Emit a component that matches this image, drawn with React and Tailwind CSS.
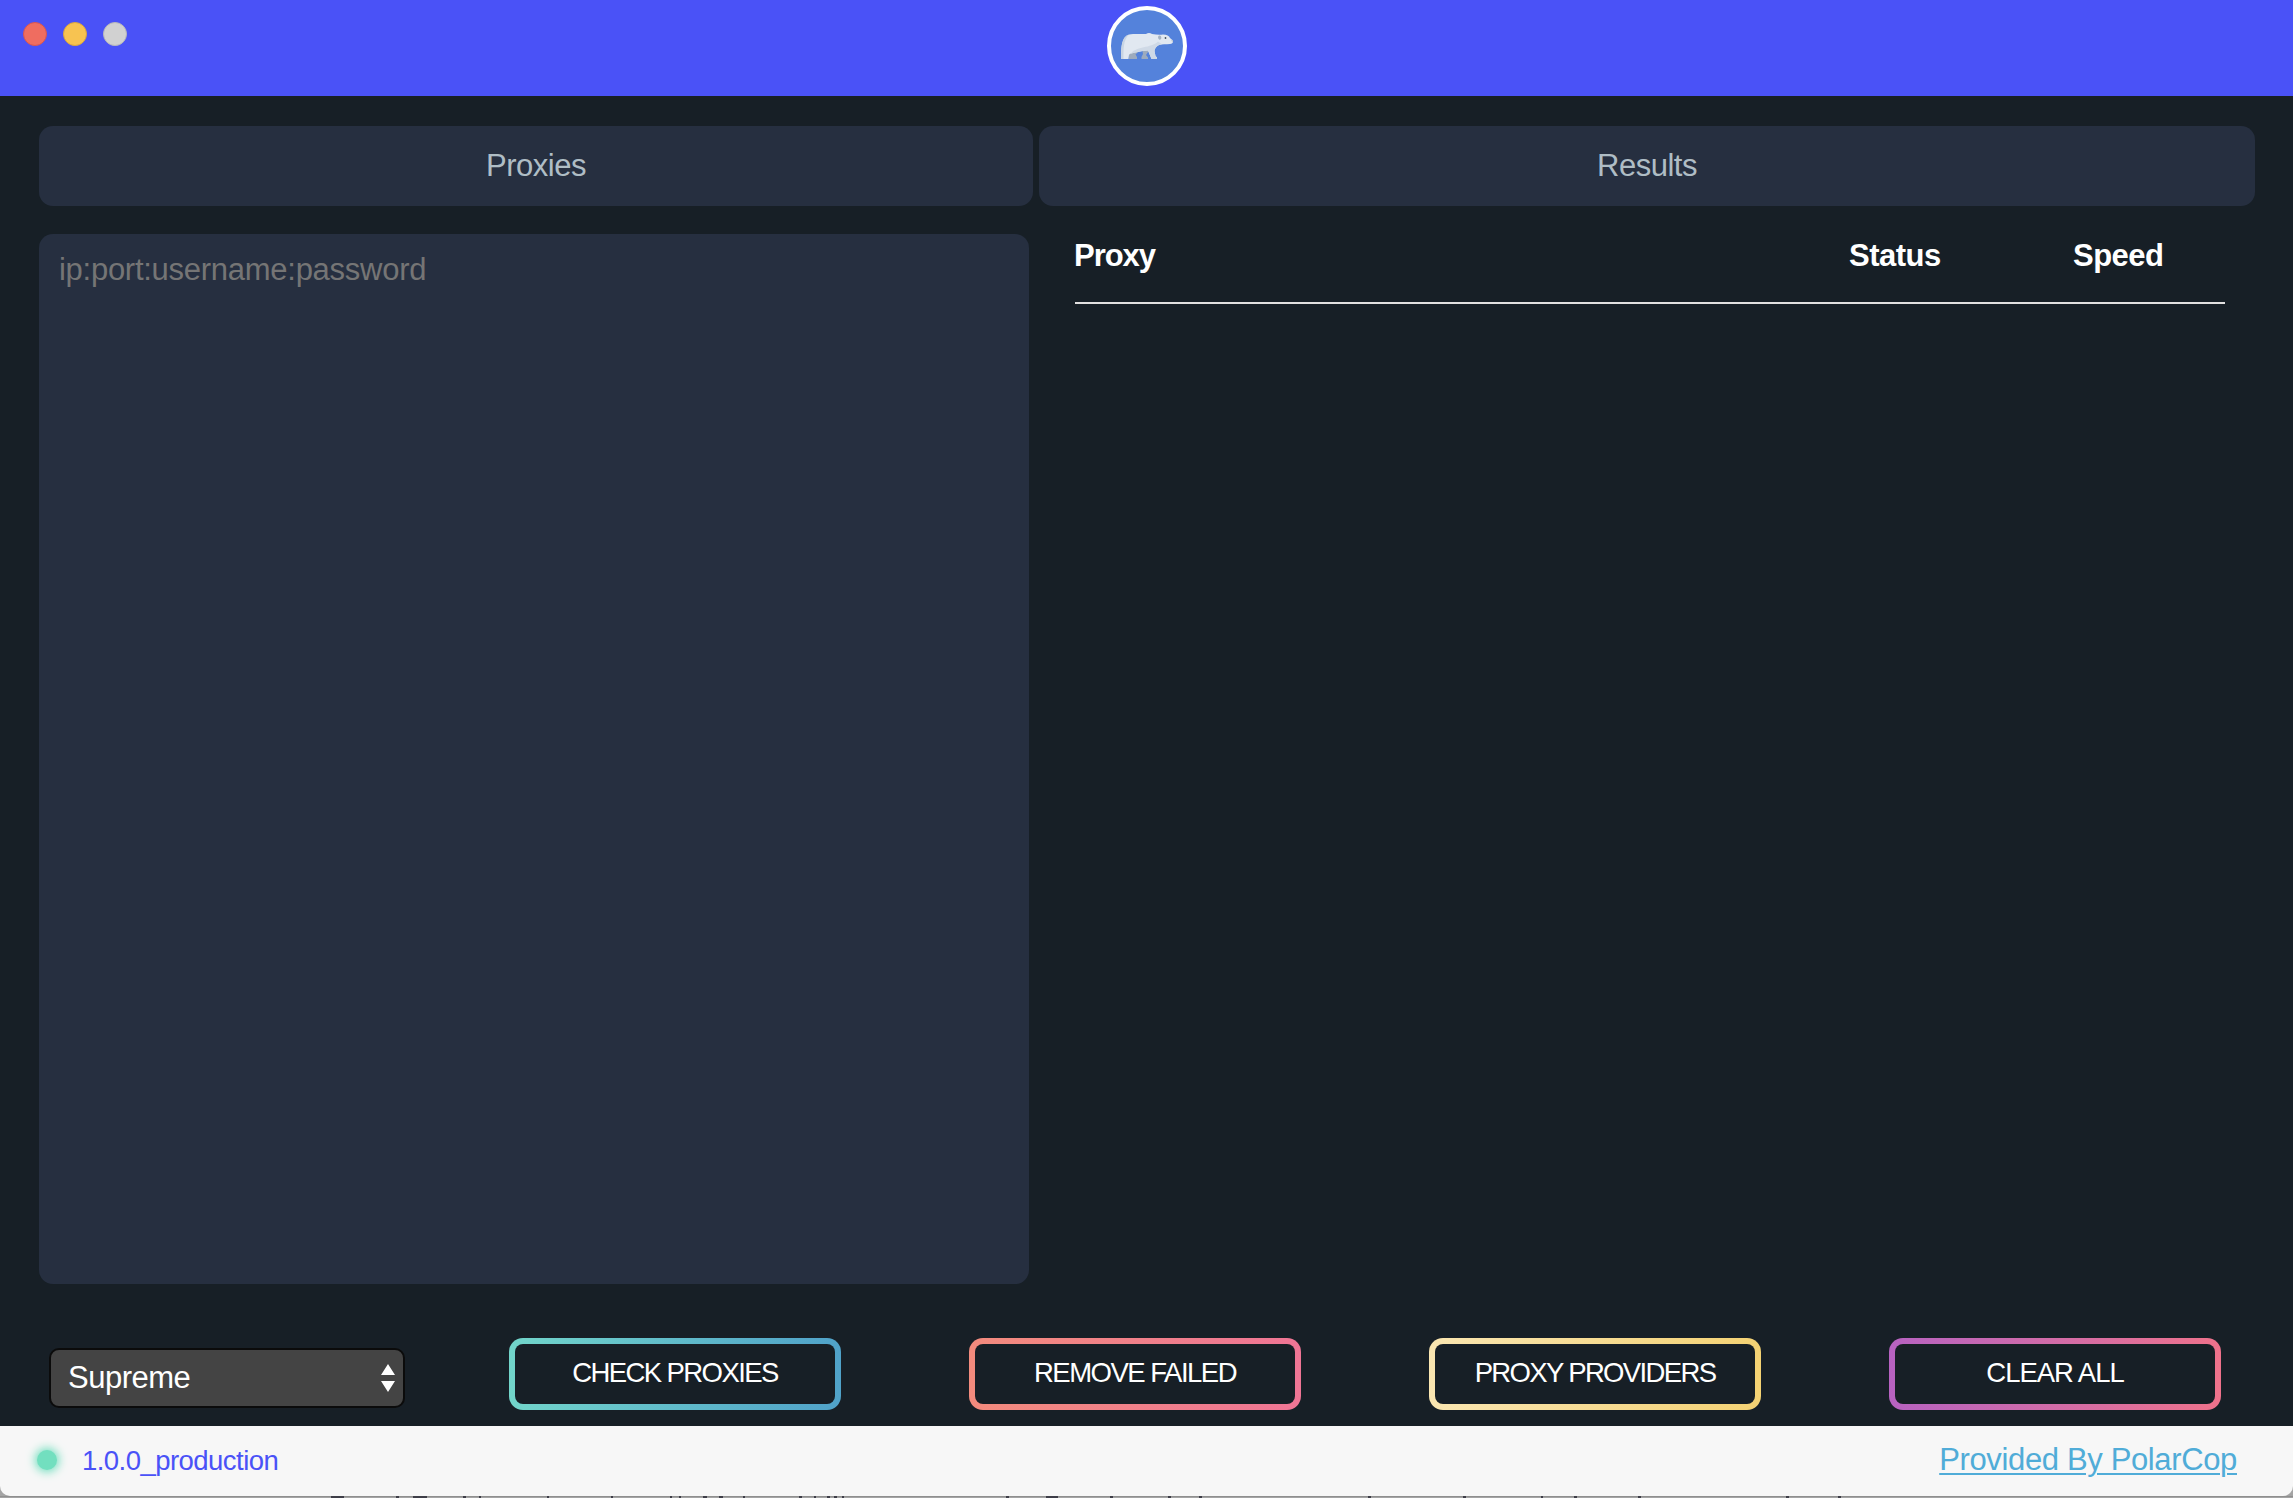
const buttons = [
  { label: "CHECK PROXIES", style: "from-[#72d5ca] to-[#50a2c9] tracking-[-1.6px]" },
  { label: "REMOVE FAILED", style: "from-[#f38b7d] to-[#ef7595] tracking-[-1.5px]" },
  { label: "PROXY PROVIDERS", style: "from-[#fae6b1] to-[#f4d273] tracking-[-1.65px]" },
  { label: "CLEAR ALL", style: "from-[#b762c1] to-[#ef728b] tracking-[-1.05px]" },
];

// [x, width] of the dark marks peeking out below the window
const marks = [
  [331, 13], [396, 3], [413, 14], [463, 3], [479, 2], [547, 2], [611, 2], [670, 2], [679, 2],
  [703, 4], [719, 4], [743, 2], [799, 3], [814, 2], [827, 3], [834, 3], [842, 2], [1006, 3],
  [1046, 12], [1110, 3], [1168, 3], [1199, 3], [1368, 3], [1463, 3], [1541, 2], [1574, 3],
  [1638, 3], [1786, 3], [1838, 3],
];

function BearLogo() {
  return (
    <div className="h-20 w-20 overflow-hidden rounded-full border-4 border-white bg-[#5482db]">
      <svg viewBox="21 10 72 72" className="block h-full w-full">
        <path d="M39 52L50 50L45.500 54.500L47 57V59H39Z M52 49H60L56 55L58 57.500V59H51.500V57L53 54Z" fill="#9dabbd" />
        <path
          d="M31 59C31 47 31.500 34 43 34L56 34C58 32.700 60 32.700 62 34C66 34.800 70 35 73 34.500C77 34.500 79 36 80 38L83 40.500C83.500 42.500 82 44 80 44C76 44.500 72 44 69 45C66 46.500 64.500 49 64.500 51L65.500 56L67 57.500V59H61.500L58 50.500C54 50.500 51 51.500 48 52C44 53 40 53 39 55L38.500 59Z"
          fill="#e1e8f1"
        />
        <path
          d="M41 53.500C46 46 61 48.500 68 41.500L72 44.200L69 45C66 46.500 64.500 49 64.500 51L65.500 56L67 57.500V59H61.500L58 50.500C54 50.500 51 51.500 48 52Z"
          fill="#cfd9e6"
        />
        <path d="M31 59C31 47 31.500 36 39 34.500C33 40 33.500 50 33.500 59Z" fill="#c9d5e3" />
        <path d="M68.500 36C70 35 71.500 36 71.300 38C71.200 39.500 70 40 69.200 39.500C68 38.800 67.700 37 68.500 36Z" fill="#a5b2c3" />
        <circle cx="75.500" cy="38" r="0.900" fill="#46535f" />
        <path d="M81.500 39.500L83 40.500L82.800 42L81.500 41Z" fill="#b3bfcd" />
      </svg>
    </div>
  );
}

function Dot({ color }) {
  return <span className={`h-6 w-6 rounded-full border ${color}`} />;
}

export default function App() {
  return (
    <div className="flex h-[1498px] w-[2293px] flex-col overflow-hidden bg-[#a4a4a4] font-['Liberation_Sans',sans-serif] text-[31px] leading-9 tracking-[-0.5px]">
      <header className="grid h-24 shrink-0 grid-cols-[1fr_auto_1fr] items-start bg-[#4a52f7]">
        <div className="flex gap-4 pt-[22px] pl-[23px]">
          <Dot color="border-[#d85650] bg-[#ef6d60]" />
          <Dot color="border-[#dba63e] bg-[#f7c351]" />
          <Dot color="border-[#b8b8b8] bg-[#d1d1d1]" />
        </div>
        <div className="pt-1.5">
          <BearLogo />
        </div>
      </header>

      <main className="flex h-[1330px] shrink-0 flex-col bg-[#171f26]">
        <div className="flex gap-1.5 pt-[30px] pl-[39px] text-[#afbdc5]">
          <div className="flex h-20 w-[994px] items-center justify-center rounded-[14px] bg-[#262f40]">Proxies</div>
          <div className="flex h-20 w-[1216px] items-center justify-center rounded-[14px] bg-[#262f40]">Results</div>
        </div>

        <div className="mt-7 flex pl-[39px]">
          <textarea
            className="h-[1050px] w-[990px] resize-none rounded-[14px] bg-[#262f40] px-5 py-[18px] tracking-[-0.27px] text-white outline-none placeholder:text-[#757575]"
            placeholder="ip:port:username:password"
          />
          <div className="ml-[46px] flex h-[70px] w-[1150px] border-b-2 border-[#e2e0e0] pt-1 font-bold text-white">
            <div className="-ml-px w-[775px] tracking-[-1.05px]">Proxy</div>
            <div className="w-[224px]">Status</div>
            <div>Speed</div>
          </div>
        </div>

        <div className="flex pt-[54px] pl-[49px]">
          <div className="mt-2.5 flex h-[60px] w-[356px] items-center justify-between rounded-[10px] border-2 border-[#0b0b0b] bg-[#444444] pr-2 pl-[17px] text-white">
            <span>Supreme</span>
            <svg viewBox="0 0 14 28" className="h-7 w-3.5 fill-white">
              <path d="M7 0l7 11H0z M0 17h14L7 28z" />
            </svg>
          </div>
          <div className="ml-[104px] flex gap-32">
            {buttons.map((b) => (
              <button key={b.label} className={`h-[72px] w-[332px] rounded-[14px] bg-linear-to-r p-1.5 ${b.style}`}>
                <span className="flex h-full w-full items-center justify-center rounded-[8px] bg-[#171f26] pb-0.5 text-[27.5px] text-white">
                  {b.label}
                </span>
              </button>
            ))}
          </div>
        </div>
      </main>

      <footer className="flex h-[70px] shrink-0 items-center rounded-b-[10px] bg-[#f7f7f7] pr-14 pl-[37px]">
        <span className="mt-[-2px] h-5 w-5 rounded-full bg-[#72dfbf] shadow-[0_0_10px_2px_#72dfbf]" />
        <span className="ml-[25px] text-[27.5px] tracking-[-0.54px] text-[#4a52f7]">1.0.0_production</span>
        <a className="mb-0.5 ml-auto tracking-[-0.36px] text-[#50acd8] underline decoration-2 underline-offset-[3px]">
          Provided By PolarCop
        </a>
      </footer>
      <svg viewBox="0 0 2293 2" className="block h-0.5 w-full shrink-0">
        <rect width="2293" height="1" fill="#8f8f8f" />
        {marks.map(([x, w]) => (
          <rect key={x} x={x} y="0" width={w} height="2" fill="#3e3e48" />
        ))}
      </svg>
    </div>
  );
}
